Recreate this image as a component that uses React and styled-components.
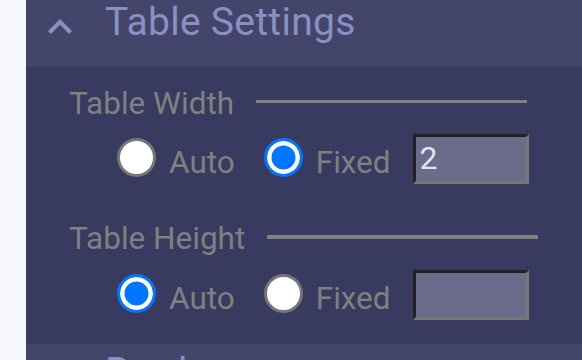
import React, { useState } from "react";
import styled, { createGlobalStyle } from "styled-components";

const Global = createGlobalStyle`
  html, body { margin: 0; padding: 0; }
  body {
    background: #f5f7fa;
    font-family: Roboto, "Noto Sans", "Liberation Sans", sans-serif;
    overflow: hidden;
  }
`;

const Page = styled.div`
  display: flex;
  padding-left: 26px;
  height: 360px;
  overflow: hidden;
`;

const Panel = styled.div`
  flex: 1;
  display: flex;
  flex-direction: column;
  margin-top: -6px;
  background: #393a5f;
`;

const Header = styled.div`
  display: flex;
  align-items: flex-start;
  height: 73px;
  box-sizing: border-box;
  padding: 6px 0 0 22px;
  background: #43456a;
  color: #8a90c2;
  flex: none;
`;

const Chevron = styled.svg`
  width: 24px;
  height: 15px;
  margin-top: 19px;
  margin-right: 33px;
  flex: none;
  fill: currentColor;
`;

const Title = styled.div`
  font-size: 39px;
  line-height: 44.5px;
  letter-spacing: 0.3px;
  white-space: nowrap;
`;

const Body = styled.div`
  display: flex;
  flex-direction: column;
  padding: 18.5px 0 24px 43px;
  flex: none;
`;

const Group = styled.div`
  display: flex;
  flex-direction: column;
  & + & { margin-top: 37px; }
`;

const LabelRow = styled.div`
  display: flex;
  align-items: center;
  height: 35px;
  color: #808080;
  font-size: 31.5px;
  line-height: 35px;
`;

const Rule = styled.div`
  width: 271px;
  height: 3.5px;
  margin: 0 0 3px 22px;
  background: #808080;
  flex: none;
`;

const RadioRow = styled.div`
  display: flex;
  align-items: center;
  gap: 22px;
  height: 50px;
  margin-top: 13.5px;
  padding-left: 48px;
`;

const Option = styled.label`
  display: flex;
  align-items: center;
  color: #808080;
  font-size: 31.5px;
  line-height: 35px;
  cursor: pointer;
  & + & { margin-left: 7px; }
`;

const Radio = styled.input.attrs({ type: "radio" })`
  appearance: none;
  -webkit-appearance: none;
  margin: 0 13px 3px 0;
  width: 39px;
  height: 39px;
  box-sizing: border-box;
  border-radius: 50%;
  border: 3px solid #767676;
  background: #ffffff;
  flex: none;
  cursor: pointer;
  &:checked {
    border: 3.5px solid #0075ff;
    background: #0075ff;
    box-shadow: inset 0 0 0 4.5px #ffffff;
  }
`;

const OptionText = styled.span`
  margin-top: 7px;
`;

const SizeInput = styled.input`
  width: 116px;
  height: 50px;
  box-sizing: border-box;
  border-style: solid;
  border-width: 3px;
  border-color: #222222 #777777 #777777 #222222;
  background: #6b6b8b;
  color: #e2e2ee;
  font-family: Roboto, "Noto Sans", sans-serif;
  font-size: 32px;
  padding: 0 0 3px 4px;
  margin: 0;
  outline: none;
  flex: none;
`;

function SizeSetting({ label, name, mode, value, onMode, onValue }) {
  return (
    <Group>
      <LabelRow>
        <span>{label}</span>
        <Rule />
      </LabelRow>
      <RadioRow>
        <Option>
          <Radio name={name} checked={mode === "auto"} onChange={() => onMode("auto")} />
          <OptionText>Auto</OptionText>
        </Option>
        <Option>
          <Radio name={name} checked={mode === "fixed"} onChange={() => onMode("fixed")} />
          <OptionText>Fixed</OptionText>
        </Option>
        <SizeInput value={value} onChange={(e) => onValue(e.target.value)} />
      </RadioRow>
    </Group>
  );
}

const ExpandLess = () => (
  <Chevron viewBox="6 8 12 7.41">
    <path d="M12 8l-6 6 1.41 1.41L12 10.83l4.59 4.58L18 14z" />
  </Chevron>
);

const ExpandMore = () => (
  <Chevron viewBox="6 8.59 12 7.41">
    <path d="M16.59 8.59L12 13.17 7.41 8.59 6 10l6 6 6-6z" />
  </Chevron>
);

export default function App() {
  const [wMode, setWMode] = useState("fixed");
  const [hMode, setHMode] = useState("auto");
  const [wVal, setWVal] = useState("2");
  const [hVal, setHVal] = useState("");

  return (
    <>
      <Global />
      <Page>
        <Panel>
          <Header>
            <ExpandLess />
            <Title>Table Settings</Title>
          </Header>
          <Body>
            <SizeSetting
              label="Table Width"
              name="tw"
              mode={wMode}
              value={wVal}
              onMode={setWMode}
              onValue={setWVal}
            />
            <SizeSetting
              label="Table Height"
              name="th"
              mode={hMode}
              value={hVal}
              onMode={setHMode}
              onValue={setHVal}
            />
          </Body>
          <Header>
            <ExpandMore />
            <Title>Borders</Title>
          </Header>
        </Panel>
      </Page>
    </>
  );
}
